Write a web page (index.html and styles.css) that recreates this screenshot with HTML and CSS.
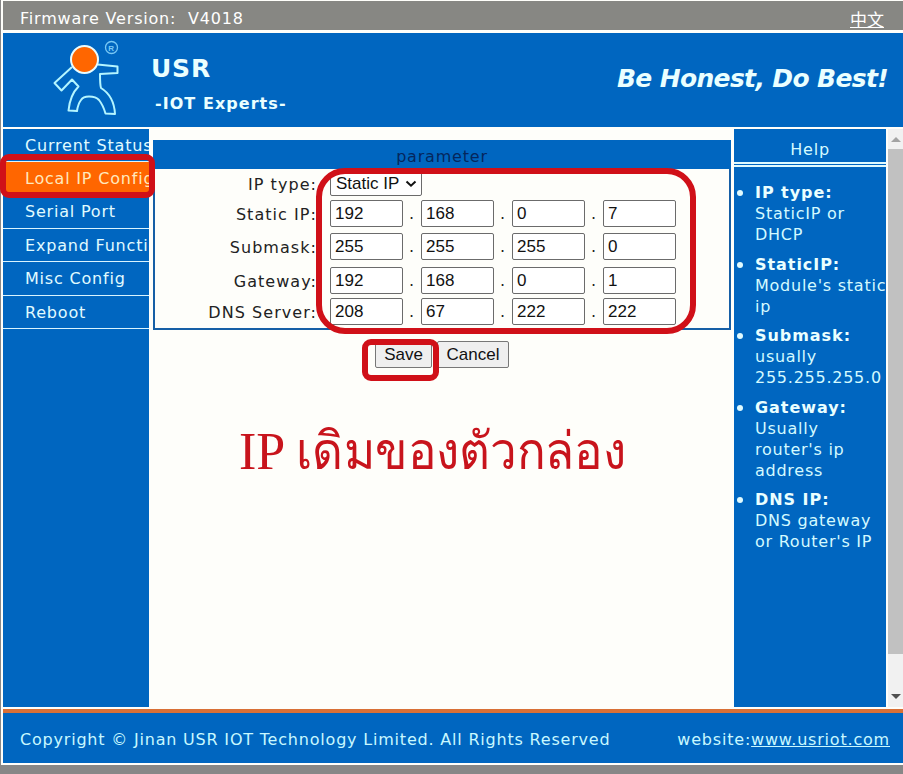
FILE: index.html
```
<!DOCTYPE html>
<html lang="en">
<head>
<meta charset="utf-8">
<title>USR IOT - Local IP Config</title>
<link rel="stylesheet" href="styles.css">
</head>
<body>
<div class="page">
  <header class="topbar"><span>Firmware Version:&nbsp; V4018</span><a class="lang" href="#">中文</a></header>
  <div class="banner">
    <svg class="logo" viewBox="0 0 80 85" width="80" height="85" fill="none" stroke="#b4f5ff" stroke-width="2" stroke-linejoin="round">
      <path d="M27 32 L9.500 48 L16.500 55.500 L27 44.500 L33.500 51.500 Q25 60 23.500 75.500 L32 76 Q33 69 36 65 Q38 61.500 44 61.500 Q51 61.500 54 65 Q58 70 60.500 78.500 L70 79 Q69 61 56 53 Q55 50 55 39 L72.500 38 L72.500 31.500 L52.500 29.500"/>
      <circle cx="39.500" cy="24.500" r="13.500" fill="#ff6600" stroke="#e8fcff"/>
      <circle cx="66.500" cy="12.500" r="6" stroke="#78c8f5" stroke-width="1.300"/>
      <text class="reg" x="66.500" y="15.500">R</text>
    </svg>
    <div class="brand"><div class="name">USR</div><div class="tag">-IOT Experts-</div></div>
    <div class="slogan">Be Honest, Do Best!</div>
  </div>
  <div class="body">
    <nav class="menu">
      <a href="#">Current Status</a>
      <a href="#" class="active">Local IP Config</a>
      <a href="#">Serial Port</a>
      <a href="#">Expand Function</a>
      <a href="#">Misc Config</a>
      <a href="#">Reboot</a>
    </nav>
    <main class="main">
      <section class="panel">
        <h2 class="panel-title">parameter</h2>
        <div class="row r1"><span class="label">IP type:</span><span class="select">Static IP<svg width="12" height="8" viewBox="0 0 12 8"><path d="M1.500 1.500 L6 5.700 L10.500 1.500" fill="none" stroke="#111" stroke-width="2"/></svg></span></div>
        <div class="row r2"><span class="label">Static IP:</span><span class="field">192</span><i>.</i><span class="field">168</span><i>.</i><span class="field">0</span><i>.</i><span class="field">7</span></div>
        <div class="row r3"><span class="label">Submask:</span><span class="field">255</span><i>.</i><span class="field">255</span><i>.</i><span class="field">255</span><i>.</i><span class="field">0</span></div>
        <div class="row r4"><span class="label">Gateway:</span><span class="field">192</span><i>.</i><span class="field">168</span><i>.</i><span class="field">0</span><i>.</i><span class="field">1</span></div>
        <div class="row r5"><span class="label">DNS Server:</span><span class="field">208</span><i>.</i><span class="field">67</span><i>.</i><span class="field">222</span><i>.</i><span class="field">222</span></div>
      </section>
      <div class="buttons"><button class="save">Save</button><button class="cancel">Cancel</button></div>
      <p class="note" lang="th">IP <span class="thai">เดิมของตัวกล่อง</span></p>
    </main>
    <aside class="help">
      <div class="help-title">Help</div>
      <ul class="help-list">
        <li><b>IP type:</b><br>StaticIP or<br>DHCP</li>
        <li><b>StaticIP:</b><br>Module's static<br>ip</li>
        <li><b>Submask:</b><br>usually<br>255.255.255.0</li>
        <li><b>Gateway:</b><br>Usually<br>router's ip<br>address</li>
        <li><b>DNS IP:</b><br>DNS gateway<br>or Router's IP</li>
      </ul>
    </aside>
    <div class="scroll">
      <svg width="15" height="20" viewBox="0 0 15 20"><path d="M3 13 L8 8 L13 13Z" fill="#a3a3a3"/></svg>
      <div class="thumb"></div>
      <svg width="15" height="20" viewBox="0 0 15 20"><path d="M3 7 L8 12 L13 7Z" fill="#505050"/></svg>
    </div>
  </div>
  <footer class="footer"><span class="copy">Copyright © Jinan USR IOT Technology Limited. All Rights Reserved</span><span class="site">website:<a href="#">www.usriot.com</a></span></footer>
</div>
<div class="mark mark-menu"></div>
<div class="mark mark-form"></div>
<div class="mark mark-save"></div>
</body>
</html>
```
FILE: styles.css
```
* { box-sizing: border-box; }
body {
  margin: 0;
  width: 903px;
  height: 774px;
  overflow: hidden;
  background: #878787;
  position: relative;
  font-family: Verdana, "DejaVu Sans", "Noto Sans CJK SC", sans-serif;
  font-size: 16px;
  letter-spacing: 0.8px;
}
a { color: inherit; }
.page {
  margin-left: 1px;
  height: 765px;
  padding: 1px 0 2px 2px;
  background: #fefefa;
  display: flex;
  flex-direction: column;
}
.topbar {
  height: 29px;
  flex: none;
  background: #878783;
  color: #fff;
  display: flex;
  justify-content: space-between;
  padding: 0 19px 0 17px;
  line-height: 36px;
}
.lang { font-size: 17px; line-height: 35px; letter-spacing: 0; font-family: "Noto Sans CJK SC", sans-serif; }
.banner {
  height: 94px;
  flex: none;
  margin-top: 3px;
  background: #0066c0;
  color: #eaffff;
  display: flex;
}
.logo { margin: 2px 0 0 42px; flex: none; }
.reg { font: bold 8px "Liberation Sans", sans-serif; fill: #78c8f5; stroke: none; text-anchor: middle; }
.brand { margin-left: 26px; font-weight: bold; }
.name { font-size: 25px; line-height: 30px; margin-top: 21px; letter-spacing: 0.8px; }
.tag { font-size: 16px; line-height: 20px; margin: 10px 0 0 4px; letter-spacing: 1.05px; }
.slogan {
  margin: 30px 15px 0 auto;
  font: italic bold 25px/32px Verdana, "DejaVu Sans", sans-serif;
  letter-spacing: -0.65px;
  white-space: nowrap;
}
.body { height: 578px; flex: none; margin-top: 2px; display: flex; }
.menu { width: 146px; background: #0066c0; flex: none; }
.menu a {
  display: block;
  height: 33.4px;
  line-height: 34px;
  padding-left: 22px;
  border-bottom: 1px solid #d8f4ff;
  color: #e0fbff;
  text-decoration: none;
  white-space: nowrap;
  overflow: hidden;
}
.menu a:first-child { height: 33px; line-height: 33px; }
.menu .active { background: #ff6600; color: #ffe8bd; }
.main { width: 585px; flex: none; padding: 11px 3px 0 4px; }
.panel { height: 190px; border: 2px solid #165fa6; border-top: 0; }
.panel-title {
  margin: 0 -2px;
  height: 29px;
  background: #0066c0;
  color: #05265c;
  text-align: center;
  font-size: 16px;
  font-weight: normal;
  line-height: 33px;
}
.row { display: flex; align-items: center; color: #222; }
.r1 { height: 30px; }
.r2 { height: 29px; }
.r3 { height: 37px; }
.r4 { height: 31px; }
.r5 { height: 31px; }
.label { width: 162px; margin-right: 13px; padding-top: 1px; text-align: right; white-space: nowrap; letter-spacing: 1.05px; }
.row i { width: 18px; text-align: center; font-style: normal; }
.field, .select {
  border: 1px solid #6b6b6b;
  border-radius: 2px;
  background: #fff;
  font-family: "Liberation Sans", Arial, sans-serif;
  font-size: 17px;
  letter-spacing: 0;
  color: #111;
}
.field { width: 73px; height: 27px; line-height: 25px; padding-left: 4px; }
.select { width: 92px; height: 24px; line-height: 22px; padding: 0 4px 0 5px; display: flex; align-items: center; justify-content: space-between; white-space: nowrap; }
.buttons { display: flex; margin: 11px 0 0 222px; }
.buttons button {
  height: 27px;
  border: 1px solid #777;
  border-radius: 2px;
  background: #efefef;
  padding: 0;
  color: #111;
  font: 17px "Liberation Sans", Arial, sans-serif;
}
.save { width: 57px; }
.cancel { width: 72px; margin-left: 5px; }
.note {
  margin: 48px 0 0 86px;
  font: 52px/72px "Liberation Serif", "Times New Roman", serif;
  letter-spacing: 0;
  color: #c8141c;
  white-space: nowrap;
}
.thai { display: inline-block; transform: scaleX(0.915); transform-origin: left; }
.help { width: 152px; flex: none; background: #0066c0; color: #d4faff; }
.help-title { height: 38px; border-bottom: 5px double #e0fbff; text-align: center; line-height: 41px; }
.help-list { margin: 0; padding: 15px 0 0 21px; list-style: none; line-height: 21px; white-space: nowrap; letter-spacing: 0.75px; }
.help-list li { margin-bottom: 8.5px; position: relative; }
.help-list li::before { content: ""; position: absolute; left: -18px; top: 8px; width: 6px; height: 6px; border-radius: 50%; background: #e0fbff; }
.help-list b { color: #eaffff; letter-spacing: 0.95px; }
.scroll { width: 15px; margin-left: 2px; background: #f1f1f1; display: flex; flex-direction: column; }
.scroll svg { flex: none; display: block; }
.thumb { height: 505px; background: #c1c1c1; margin-bottom: 33px; }
.footer {
  height: 54px;
  flex: none;
  margin-top: 2px;
  border-top: 4px solid #d97036;
  background: #0066c0;
  color: #c8f8ff;
  display: flex;
  justify-content: space-between;
  padding: 0 13px 0 17px;
  line-height: 53px;
  white-space: nowrap;
}
.mark { position: absolute; border: 6px solid #d01018; }
.mark-menu { left: 0; top: 154px; width: 155px; height: 44px; border-radius: 9px; }
.mark-form { left: 316px; top: 168px; width: 380px; height: 166px; border-radius: 29px; }
.mark-save { left: 362px; top: 339px; width: 77px; height: 42px; border-radius: 9px; }
```
